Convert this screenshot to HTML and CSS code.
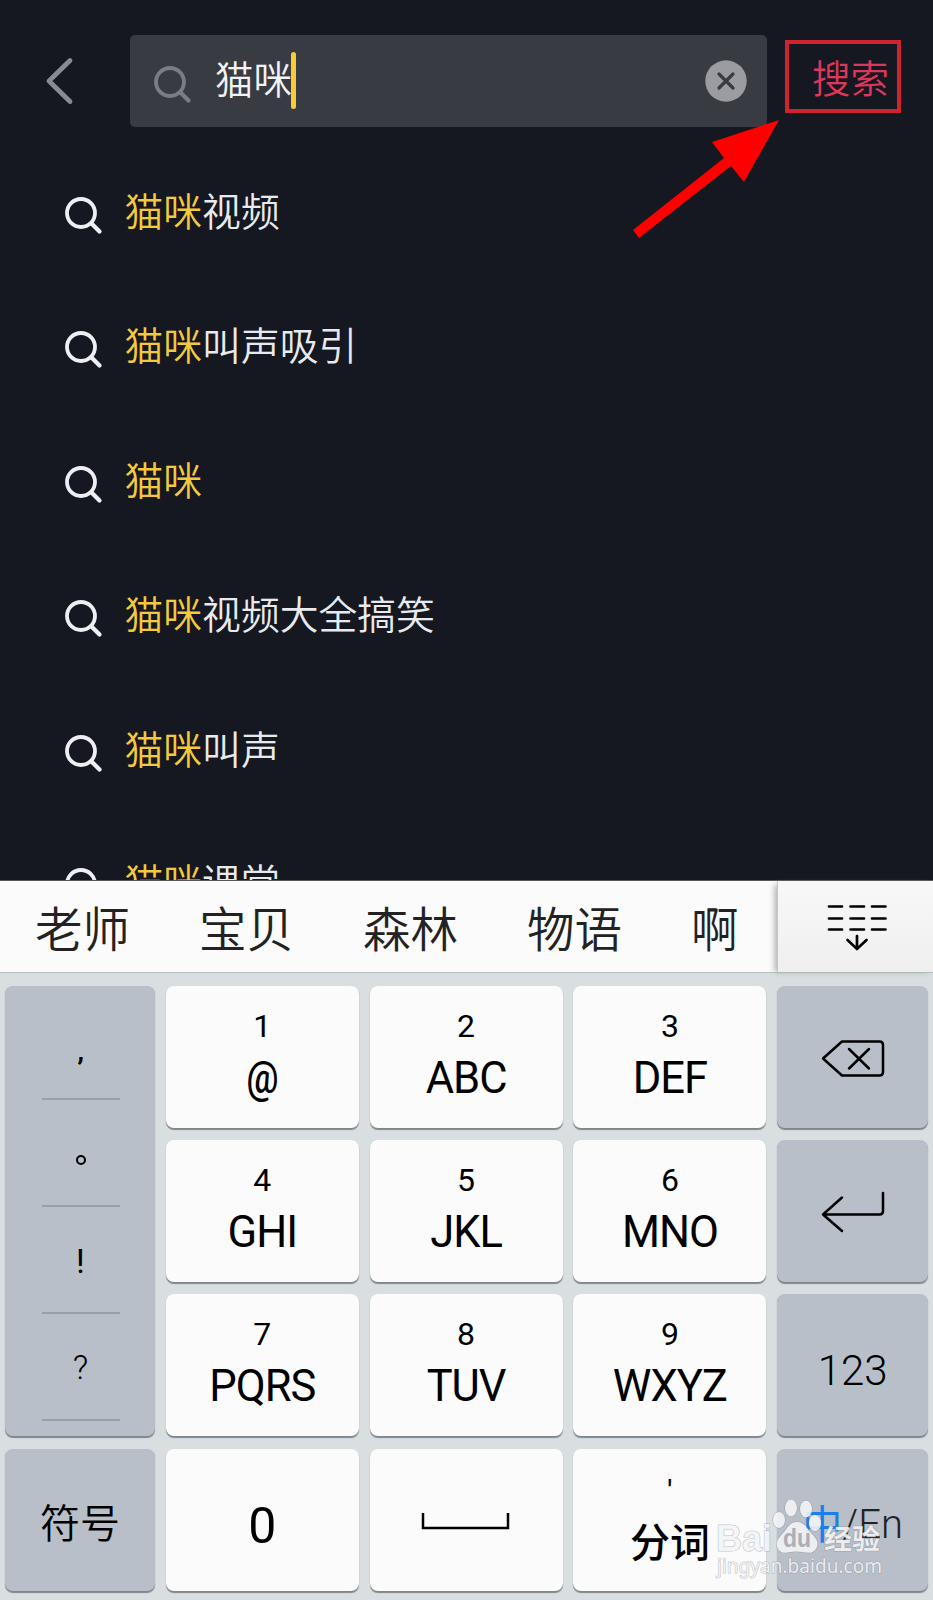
FILE: index.html
```html
<!DOCTYPE html>
<html lang="zh-CN">
<head>
<meta charset="utf-8">
<title>猫咪</title>
<link rel="stylesheet" href="styles.css">
</head>
<body>
<svg class="defs" width="0" height="0"><symbol id="search" viewBox="0 0 40 40"><circle cx="17" cy="17" r="14" fill="none" stroke="currentColor" stroke-width="3.8"/><path d="M27.5 27.5 35.5 35.5" fill="none" stroke="currentColor" stroke-width="4.2" stroke-linecap="round"/></symbol></svg>
<main class="screen">
  <section class="app">
    <header class="top">
      <svg class="back" viewBox="0 0 30 50"><path d="M25 4.500 4 25 25 45.500" fill="none" stroke="currentColor" stroke-width="4.800" stroke-linecap="round" stroke-linejoin="round"/></svg>
      <div class="field">
        <svg class="glass"><use href="#search"/></svg>
        <span class="query">猫咪</span><i class="caret"></i>
        <svg class="clear" viewBox="0 0 42 42"><circle cx="21" cy="21" r="20.7" fill="#9b9ca1"/><path d="M14 14 28 28M28 14 14 28" stroke="#393b43" stroke-width="3.2" stroke-linecap="round"/></svg>
      </div>
      <div class="go">搜索</div>
    </header>
    <ul class="list">
      <li><svg class="glass"><use href="#search"/></svg><span><b>猫咪</b>视频</span></li>
      <li><svg class="glass"><use href="#search"/></svg><span><b>猫咪</b>叫声吸引</span></li>
      <li><svg class="glass"><use href="#search"/></svg><span><b>猫咪</b></span></li>
      <li><svg class="glass"><use href="#search"/></svg><span><b>猫咪</b>视频大全搞笑</span></li>
      <li><svg class="glass"><use href="#search"/></svg><span><b>猫咪</b>叫声</span></li>
      <li class="cut"><svg class="glass"><use href="#search"/></svg><span><b>猫咪</b>课堂</span></li>
    </ul>
    <svg class="arrow" viewBox="0 0 150 125"><path d="M150 0 83 22 95 38 4 110 10 118 102 46 115 62Z" fill="#fe0000"/></svg>
  </section>
  <section class="cands">
    <div class="words"><span>老师</span><span>宝贝</span><span>森林</span><span>物语</span><span>啊</span></div>
    <div class="fold"><svg viewBox="0 0 60 48" width="60" height="48"><path d="M2 3.500H15M23.500 3.500H37M45 3.500H58.500M2 15.500H15M23.500 15.500H37M45 15.500H58.500M2 26.500H15M23.500 26.500H37M45 26.500H58.500" stroke="#000" stroke-width="2.700" stroke-linecap="round"/><path d="M30 33V46M20.500 37 30 46 39.500 37" fill="none" stroke="#000" stroke-width="2.700" stroke-linecap="round"/></svg></div>
  </section>
  <section class="keys">
    <div class="key gray marks"><span class="comma">’</span><span class="stop"><i></i></span><span class="bang">!</span><span class="ask">?</span></div>
    <div class="key"><small>1</small><em class="at">@</em></div>
    <div class="key"><small>2</small><em>ABC</em></div>
    <div class="key"><small>3</small><em>DEF</em></div>
    <div class="key gray del"><svg width="64" height="38" viewBox="0 0 64 38"><path d="M21 1.500H58.500Q62 1.500 62 5V32Q62 35.500 58.500 35.500H21L2 18.500Z" fill="none" stroke="#000" stroke-width="2.500" stroke-linejoin="round"/><path d="M28 9 48 28.500M48 9 28 28.500" stroke="#000" stroke-width="2.500" stroke-linecap="round"/></svg></div>
    <div class="key"><small>4</small><em>GHI</em></div>
    <div class="key"><small>5</small><em>JKL</em></div>
    <div class="key"><small>6</small><em>MNO</em></div>
    <div class="key gray enter"><svg width="64" height="42" viewBox="0 0 64 42"><path d="M62 2V20Q62 23.500 58.500 23.500H2M21 6.500 2 23.500 21 40" fill="none" stroke="#000" stroke-width="2.500" stroke-linecap="round" stroke-linejoin="round"/></svg></div>
    <div class="key"><small>7</small><em>PQRS</em></div>
    <div class="key"><small>8</small><em>TUV</em></div>
    <div class="key"><small>9</small><em>WXYZ</em></div>
    <div class="key gray num">123</div>
    <div class="key gray sym">符号</div>
    <div class="key zero">0</div>
    <div class="key space"><svg width="90" height="20" viewBox="0 0 90 20"><path d="M2 1V16H87V1" fill="none" stroke="#000" stroke-width="2.500"/></svg></div>
    <div class="key"><small>'</small><em class="split">分词</em></div>
    <div class="key gray lang"><span>中</span>/En</div>
  </section>
  <div class="mark">
    <svg viewBox="0 0 180 90" width="180" height="90">
      <g class="logo">
        <text x="2" y="51" class="bai" textLength="56" lengthAdjust="spacingAndGlyphs">Bai</text>
        <ellipse cx="65" cy="20" rx="6" ry="8"/><ellipse cx="77" cy="8" rx="6" ry="8.500"/><ellipse cx="92" cy="9" rx="6" ry="8.500"/><ellipse cx="101" cy="23" rx="6" ry="8"/>
        <path d="M83 22C91 22 93 29 98 34C104 40 105 44 102 49C99 54 93 53 88 52Q82 51 77 52C69 54 65 52 63 47C61 41 66 37 70 32C74 27 76 22 83 22Z"/>
        <text x="110" y="49" class="jing" textLength="56" lengthAdjust="spacingAndGlyphs">经验</text>
        <text x="3" y="73" class="url" textLength="165" lengthAdjust="spacingAndGlyphs">jingyan.baidu.com</text>
      </g>
      <text x="69" y="47" class="du" textLength="28" lengthAdjust="spacingAndGlyphs">du</text>
    </svg>
  </div>
</main>
</body>
</html>
```
FILE: styles.css
```css
* { box-sizing: border-box; }
body { margin: 0; font-family: Roboto, "Noto Sans CJK SC", sans-serif; }
.defs { position: absolute; }
.screen { position: relative; width: 933px; height: 1600px; overflow: hidden; display: flex; flex-direction: column; background: #d9dfe1; }
.app { position: relative; flex: none; height: 881px; overflow: hidden; background: #151820; border-bottom: 1px solid #55575c; }
.top { display: flex; align-items: flex-start; padding: 35px 0 0 45px; height: 147px; }
.back { flex: none; width: 30px; height: 50px; margin-top: 21px; color: #898b92; }
.field { display: flex; align-items: center; width: 637px; height: 92px; margin-left: 55px; padding: 0 20px 0 23px; border-radius: 5px; background: #393b43; }
.glass { flex: none; width: 40px; height: 40px; }
.field .glass { color: #7c7d84; margin-top: 8px; }
.query { margin: -8px 0 0 22px; color: #f2f3f6; font-family: "Noto Sans CJK SC", sans-serif; font-size: 38.500px; line-height: 50px; font-weight: 350; width: 76px; white-space: nowrap; }
.caret { width: 5px; height: 57px; border-radius: 3px; background: #f5cc37; margin-top: -2px; }
.clear { width: 42px; height: 42px; margin-left: auto; }
.go { width: 116px; height: 73px; margin: 5px 0 0 18px; padding-left: 23px; border: 4px solid #cf2430; color: #dd375c; font-family: "Noto Sans CJK SC", sans-serif; font-size: 38.500px; line-height: 64px; font-weight: 350; }
.list { list-style: none; margin: 0; padding: 0 0 0 64px; font-family: "Noto Sans CJK SC", sans-serif; }
.list li { display: flex; align-items: center; height: 134.500px; gap: 20.500px; font-size: 38.800px; font-weight: 350; color: #e9eaed; line-height: 50px; white-space: nowrap; }
.list b { color: #f3ca3e; font-weight: 350; }
.list .glass { color: #eeeff2; margin-top: 3px; }
.list span { margin-top: -11px; }
.list .cut { margin-top: -1px; }
.arrow { position: absolute; left: 629px; top: 120px; width: 150px; height: 125px; }
.cands { flex: none; display: flex; height: 92px; background: #fbfbfb; border-bottom: 1px solid #b9c0c2; }
.words { flex: none; display: flex; gap: 69px; width: 777px; padding-left: 35px; font-family: "Noto Sans CJK SC", sans-serif; font-size: 47.500px; font-weight: 350; line-height: 92px; color: #222; white-space: nowrap; }
.fold { position: relative; flex: 1; display: flex; align-items: center; justify-content: center; padding: 1px 0 0 2px; background: linear-gradient(#f8f8f8, #efefef); border-left: 1px solid #c5c7c9; box-shadow: -4px 2px 6px -2px #aaa; }
.keys { flex: 1; display: grid; grid-template-columns: 150px 193px 193px 193px 151px; grid-template-rows: repeat(4, 142px); gap: 12.200px 10.800px; padding: 13px 5px 0; }
.key { display: flex; flex-direction: column; align-items: center; justify-content: center; border-radius: 8px; background: #fbfbfb; box-shadow: 0 1.500px 1px #7f878c; color: #000; min-width: 0; }
.key small { font-size: 32px; line-height: 38px; height: 38px; margin-top: -2px; }
.key em { font-style: normal; font-size: 43.500px; line-height: 52px; letter-spacing: -1px; margin-top: 8px; }
.key .at { transform: scaleX(.82); font-weight: 500; }
.key .split { font-family: "Noto Sans CJK SC", sans-serif; font-size: 40px; font-weight: 500; letter-spacing: 0; margin-top: 5px; line-height: 50px; }
.gray { background: #b8bfc8; }
.marks { grid-row: span 3; justify-content: flex-start; padding: 7px 0 0 1px; font-size: 34px; font-weight: 300; }
.marks span { width: 78px; height: 107px; border-bottom: 2px solid #989fa6; display: flex; justify-content: center; align-items: center; line-height: 40px; }
.marks .comma { font-size: 32px; font-weight: 500; padding-top: 46px; }
.stop i { width: 10px; height: 10px; border: 2.500px solid #000; border-radius: 50%; margin-top: 15px; }
.marks .bang { padding-top: 3px; font-weight: 400; }
.marks .ask { font-weight: 300; padding-top: 0; }
.del { padding-top: 4px; }
.num { font-size: 42px; font-weight: 300; padding-top: 11px; }
.sym { font-family: "Noto Sans CJK SC", sans-serif; font-size: 40px; font-weight: 350; padding-top: 2px; }
.zero { font-size: 50px; padding-top: 12px; }
.space { padding-top: 0; padding-bottom: 4px; }
.space svg { margin-top: 8px; }
.enter { padding-top: 2px; }
.lang { flex-direction: row; font-size: 40px; font-weight: 300; padding-top: 10px; color: #222; }
.lang span { color: #1c7ee8; font-weight: 400; margin-top: -6px; }
.mark { position: absolute; left: 714px; top: 1500px; width: 180px; height: 90px; }
.logo { fill: #f4f5f7; fill-opacity: .88; stroke: #7d8288; stroke-opacity: .45; stroke-width: 1.200; paint-order: stroke; }
.bai { font: 700 36px "Liberation Sans", sans-serif; }
.jing { font: 700 27px "Noto Sans CJK SC", sans-serif; }
.url { font: 400 20px "Noto Sans", sans-serif; }
.du { font: 700 25px "Liberation Sans", sans-serif; fill: #aab0b8; }
```
